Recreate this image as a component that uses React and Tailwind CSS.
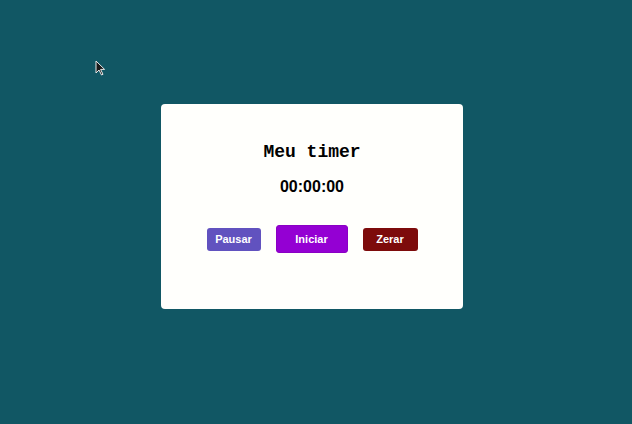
import React from 'react';

function Cursor() {
  return (
    <svg className="absolute left-[95px] top-[60px]" width="11" height="16" viewBox="0 0 11 16">
      <path d="M1 1 L1 13 L4 10 L6.5 15 L8 14.3 L5.6 9.4 L9.6 9.4 Z" fill="#1a1a1a" stroke="#e8e8e8" strokeWidth="1" strokeLinejoin="round" />
    </svg>
  );
}

export default function App() {
  return (
    <div className="relative w-full h-[424px] bg-[#115764] flex justify-center pt-[104px] pr-[8px]">
      <Cursor />
      <div className="w-[302px] h-[205px] bg-[#fffffc] rounded-[4px] flex flex-col items-center pt-[36px]">
        <h1 className="text-[18px] leading-[24px] font-bold text-black font-['Liberation_Mono',monospace]">
          Meu timer
        </h1>
        <p className="mt-[13px] text-[16px] leading-[20px] font-bold text-black font-['Liberation_Sans',Arial,sans-serif]">
          00:00:00
        </p>
        <div className="mt-[28px] flex items-center gap-[15px] font-['Liberation_Sans',Arial,sans-serif]">
          <button className="w-[54px] h-[23px] rounded-[3px] bg-[#6152bf] text-white text-[11px] font-bold">
            Pausar
          </button>
          <button className="w-[72px] h-[28px] rounded-[3px] bg-[#9400d3] border border-[#8a00c4] text-white text-[11px] font-bold">
            Iniciar
          </button>
          <button className="w-[55px] h-[23px] rounded-[3px] bg-[#7d0b0b] text-white text-[11px] font-bold">
            Zerar
          </button>
        </div>
      </div>
    </div>
  );
}
